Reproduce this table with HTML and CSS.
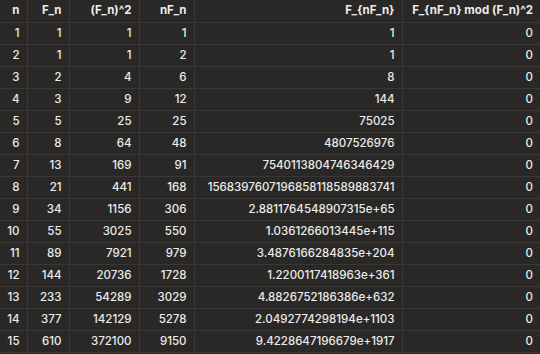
FILE: index.html
```html
<!DOCTYPE html>
<html>
<head>
<meta charset="utf-8">
<link rel="stylesheet" href="styles.css">
</head>
<body>
<table class="grid">
<colgroup>
<col class="c1"><col class="c2"><col class="c3"><col class="c4"><col class="c5"><col class="c6">
</colgroup>
<thead>
<tr><th>n</th><th>F_n</th><th>(F_n)^2</th><th>nF_n</th><th>F_{nF_n}</th><th>F_{nF_n} mod (F_n)^2</th></tr>
</thead>
<tbody>
<tr><td>1</td><td>1</td><td>1</td><td>1</td><td>1</td><td>0</td></tr>
<tr><td>2</td><td>1</td><td>1</td><td>2</td><td>1</td><td>0</td></tr>
<tr><td>3</td><td>2</td><td>4</td><td>6</td><td>8</td><td>0</td></tr>
<tr><td>4</td><td>3</td><td>9</td><td>12</td><td>144</td><td>0</td></tr>
<tr><td>5</td><td>5</td><td>25</td><td>25</td><td>75025</td><td>0</td></tr>
<tr><td>6</td><td>8</td><td>64</td><td>48</td><td>4807526976</td><td>0</td></tr>
<tr><td>7</td><td>13</td><td>169</td><td>91</td><td>7540113804746346429</td><td>0</td></tr>
<tr><td>8</td><td>21</td><td>441</td><td>168</td><td>1568397607196858118589883741</td><td>0</td></tr>
<tr><td>9</td><td>34</td><td>1156</td><td>306</td><td>2.8811764548907315e+65</td><td>0</td></tr>
<tr><td>10</td><td>55</td><td>3025</td><td>550</td><td>1.0361266013445e+115</td><td>0</td></tr>
<tr><td>11</td><td>89</td><td>7921</td><td>979</td><td>3.4876166284835e+204</td><td>0</td></tr>
<tr><td>12</td><td>144</td><td>20736</td><td>1728</td><td>1.2200117418963e+361</td><td>0</td></tr>
<tr><td>13</td><td>233</td><td>54289</td><td>3029</td><td>4.8826752186386e+632</td><td>0</td></tr>
<tr><td>14</td><td>377</td><td>142129</td><td>5278</td><td>2.0492774298194e+1103</td><td>0</td></tr>
<tr><td>15</td><td>610</td><td>372100</td><td>9150</td><td>9.4228647196679e+1917</td><td>0</td></tr>
</tbody>
</table>
</body>
</html>
```

FILE: styles.css
```css
html, body {
  margin: 0;
  padding: 0;
  background: #292826;
}
.grid {
  width: 540px;
  border-collapse: collapse;
  table-layout: fixed;
  font-family: Inter, "Noto Sans", sans-serif;
  font-size: 11.5px;
  font-weight: 500;
  color: #ececea;
}
.c1 { width: 27px; }
.c2 { width: 42px; }
.c3 { width: 70px; }
.c4 { width: 55px; }
.c5 { width: 208px; }
.c6 { width: 138px; }
.grid th, .grid td {
  box-sizing: border-box;
  text-align: right;
  padding: 0 7px 0 4px;
  height: 22px;
  line-height: 21px;
  border-bottom: 1px solid #393835;
  border-right: 1px solid #393835;
  white-space: nowrap;
  overflow: hidden;
}
.grid th {
  font-weight: 700;
}
.grid th:last-child, .grid td:last-child {
  border-right: none;
}
```
